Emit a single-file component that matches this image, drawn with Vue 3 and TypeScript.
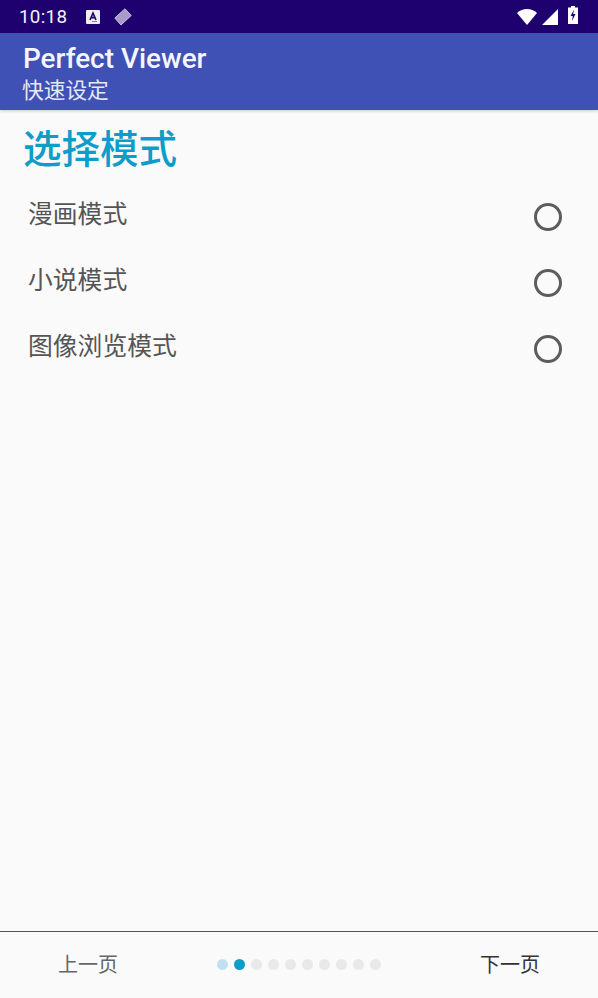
<script setup lang="ts">
const modes: string[] = ['漫画模式', '小说模式', '图像浏览模式']
const dots: number[] = [0, 1, 2, 3, 4, 5, 6, 7, 8, 9]
</script>

<template>
  <div class="screen">
    <div class="statusbar">
      <span class="time">10:18</span>
      <svg class="note-a" width="14" height="14" viewBox="0 0 14 14">
        <rect x="0" y="0" width="14" height="14" rx="1" fill="#f1edf8" />
        <path d="M4 10 L7 3 L10 10 M5.2 7.6 H8.8" fill="none" stroke="#1f006f" stroke-width="1.6" />
        <rect x="6" y="11" width="5" height="1" fill="#8c7cb6" />
      </svg>
      <svg class="note-b" width="18" height="18" viewBox="0 0 18 18">
        <path d="M0.8 10 L11 0.8 L17.2 7.5 L7 17 Z" fill="#a89ac9" stroke="#c9bfe0" stroke-width="1" />
      </svg>
      <span class="spacer"></span>
      <svg class="wifi" width="20" height="16" viewBox="0 0 20 16">
        <path d="M0 4 C5.5 -1.3 14.5 -1.3 20 4 L10 16 Z" fill="#fff" />
      </svg>
      <svg class="signal" width="16" height="16" viewBox="0 0 16 16">
        <path d="M16 0 V16 H0 Z" fill="#fff" />
      </svg>
      <svg class="battery" width="10" height="18" viewBox="0 0 10 18">
        <path d="M3 0 H7 V1.5 H10 V18 H0 V1.5 H3 Z" fill="#fff" />
        <path d="M6 3.5 L2.6 10 H4.8 L4 15 L7.5 8 H5.2 Z" fill="#1f006f" />
      </svg>
    </div>

    <header class="appbar">
      <div class="title">Perfect Viewer</div>
      <div class="subtitle">快速设定</div>
    </header>

    <main class="content">
      <h1 class="heading">选择模式</h1>
      <ul class="modes">
        <li v-for="mode in modes" :key="mode" class="mode">
          <span class="mode-label">{{ mode }}</span>
          <span class="radio"></span>
        </li>
      </ul>
    </main>

    <footer class="footer">
      <span class="nav prev">上一页</span>
      <div class="dots">
        <span
          v-for="d in dots"
          :key="d"
          class="dot"
          :class="{ done: d === 0, active: d === 1 }"
        ></span>
      </div>
      <span class="nav next">下一页</span>
    </footer>
  </div>
</template>

<style>
html, body { margin: 0; padding: 0; background: #fafafa; }
</style>

<style scoped>
.screen {
  width: 598px;
  height: 998px;
  display: flex;
  flex-direction: column;
  background: #fafafa;
  overflow: hidden;
  font-family: Roboto, "Noto Sans CJK SC", sans-serif;
}
.statusbar {
  height: 33px;
  background: #1f006f;
  display: flex;
  align-items: center;
  padding: 0 20px 0 19px;
  box-sizing: border-box;
  flex: none;
}
.time {
  color: #f4f2f9;
  font-size: 18.8px;
  letter-spacing: 0.3px;
  width: 67px;
}
.note-a { margin-right: 14px; }
.spacer { flex: 1; }
.wifi { margin-right: 5px; }
.signal { margin-right: 10px; }
.battery { margin-top: -3px; }
.appbar {
  height: 77px;
  box-sizing: border-box;
  background: #3f51b5;
  padding: 9px 23px 0;
  color: #fff;
  flex: none;
  box-shadow: 0 1px 3px rgba(0, 0, 0, 0.2);
  position: relative;
}
.title {
  font-size: 27.9px;
  font-weight: 500;
  line-height: 33px;
  color: #f5f6fb;
}
.subtitle {
  font-size: 21.7px;
  line-height: 32px;
  color: #e6e8f5;
  margin-left: -1px;
}
.content { flex: 1; min-height: 0; }
.heading {
  margin: 0;
  padding: 14px 0 0 23px;
  font-size: 38.5px;
  line-height: 52px;
  font-weight: 500;
  color: #0e9cc9;
}
.modes {
  list-style: none;
  margin: 0;
  padding: 17px 0 0;
}
.mode {
  height: 66px;
  display: flex;
  justify-content: space-between;
  padding: 0 36px 0 28px;
}
.mode-label {
  font-size: 24.8px;
  line-height: 43px;
  color: #555;
}
.radio {
  width: 28px;
  height: 28px;
  margin-top: 10px;
  box-sizing: border-box;
  border: 3px solid #5c5c5c;
  border-radius: 50%;
}
.footer {
  height: 67px;
  flex: none;
  border-top: 1px solid #555;
  box-sizing: border-box;
  display: flex;
  align-items: center;
  padding: 0 58px;
  justify-content: space-between;
}
.nav {
  font-size: 20px;
  line-height: 66px;
}
.prev { color: #666; }
.next { color: #333; }
.dots {
  display: flex;
  gap: 6px;
  margin-top: -2px;
}
.dot {
  width: 11px;
  height: 11px;
  border-radius: 50%;
  background: #e9e9e9;
}
.dot.done { background: #c0e2f0; }
.dot.active { background: #0e9cc9; }
</style>
